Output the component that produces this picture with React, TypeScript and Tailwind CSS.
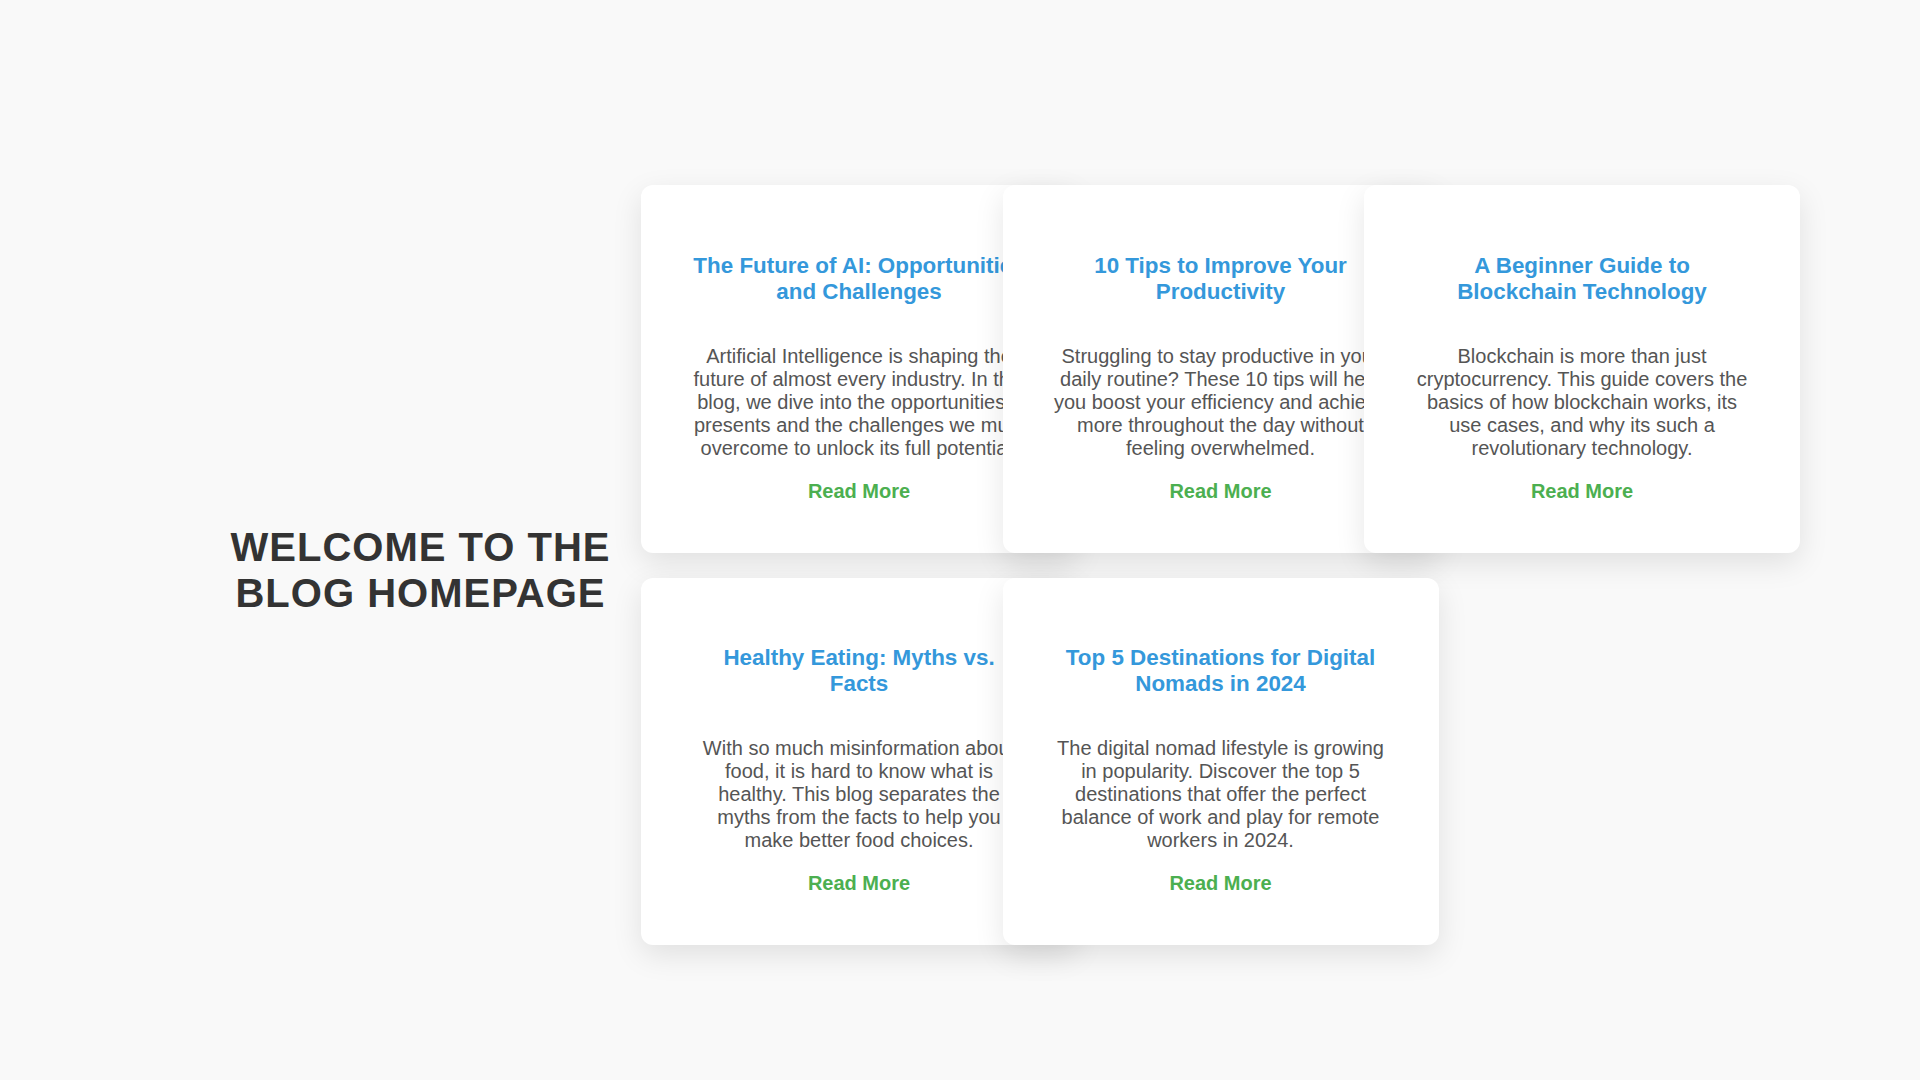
const posts = [
    {
        id: 1,
        title: 'The Future of AI: Opportunities and Challenges',
        text: 'Artificial Intelligence is shaping the future of almost every industry. In this blog, we dive into the opportunities it presents and the challenges we must overcome to unlock its full potential.',
    },
    {
        id: 2,
        title: '10 Tips to Improve Your Productivity',
        text: 'Struggling to stay productive in your daily routine? These 10 tips will help you boost your efficiency and achieve more throughout the day without feeling overwhelmed.',
    },
    {
        id: 3,
        title: 'A Beginner Guide to Blockchain Technology',
        text: 'Blockchain is more than just cryptocurrency. This guide covers the basics of how blockchain works, its use cases, and why its such a revolutionary technology.',
    },
    {
        id: 4,
        title: 'Healthy Eating: Myths vs. Facts',
        text: 'With so much misinformation about food, it is hard to know what is healthy. This blog separates the myths from the facts to help you make better food choices.',
    },
    {
        id: 5,
        title: 'Top 5 Destinations for Digital Nomads in 2024',
        text: 'The digital nomad lifestyle is growing in popularity. Discover the top 5 destinations that offer the perfect balance of work and play for remote workers in 2024.',
    },
]

const PostCard = ({ title = '', text = '' }) => {
    return (
        <div className="w-[436px] h-[367.5px] bg-white rounded-xl shadow-[0_10px_30px_rgba(0,0,0,0.1)] px-[50.5px] pt-[67.7px] text-center">
            <h2 className="text-[22.4px] font-bold text-[#3498db] leading-[normal] mb-[40px]">{title}</h2>
            <p className="text-[20px] text-[#555] leading-[23px] mb-[20px]">{text}</p>
            <a href="#" className="text-[20px] font-bold text-[#4caf50] leading-[23px] no-underline">Read More</a>
        </div>
    )
}

export default function App() {
    return (
        <div className="min-h-[1140px] bg-[#f9f9f9] font-['Liberation_Sans',Arial,sans-serif]">
            <div className="flex items-start pt-[185px] pl-[200px]">
                <h1 className="w-[441px] shrink-0 mt-[338.8px] text-center text-[40px] font-bold tracking-[1px] text-[#333] leading-[46px]">
                    WELCOME TO THE BLOG HOMEPAGE
                </h1>
                <div className="grid grid-cols-[repeat(3,336px)] gap-x-[25.5px] gap-y-[25px]">
                    {posts.map((p) => (
                        <PostCard key={p.id} title={p.title} text={p.text} />
                    ))}
                </div>
            </div>
        </div>
    )
}
